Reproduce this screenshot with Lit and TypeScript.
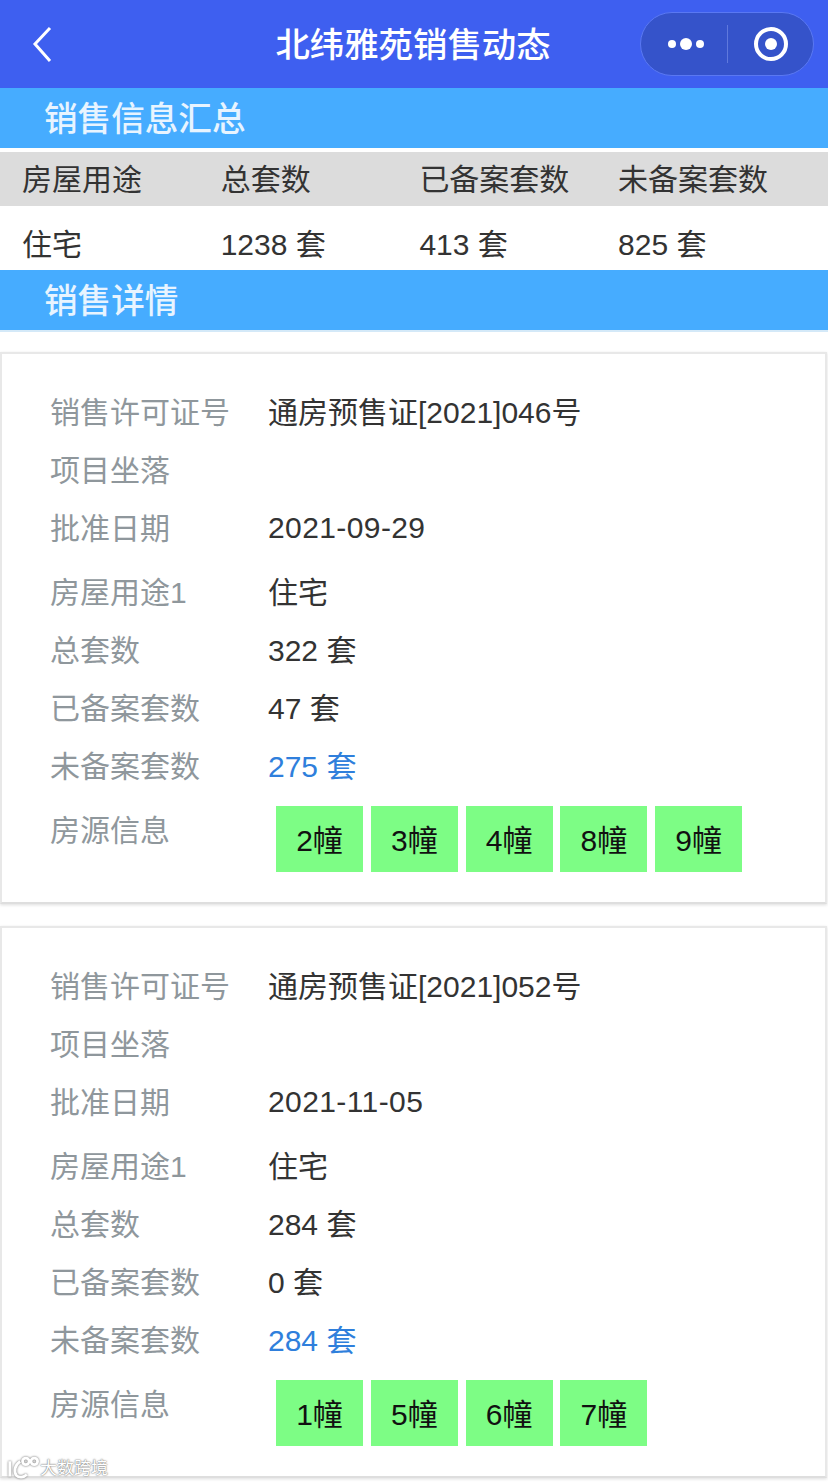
import { LitElement, html, css, svg } from "lit";
import { customElement } from "lit/decorators.js";

interface Sale {
  licence: string;
  date: string;
  total: number;
  filed: number;
  unfiled: number;
  buildings: string[];
}

const SALES: Sale[] = [
  { licence: "通房预售证[2021]046号", date: "2021-09-29", total: 322, filed: 47, unfiled: 275, buildings: ["2幢", "3幢", "4幢", "8幢", "9幢"] },
  { licence: "通房预售证[2021]052号", date: "2021-11-05", total: 284, filed: 0, unfiled: 284, buildings: ["1幢", "5幢", "6幢", "7幢"] },
];

const backIcon = svg`<path d="M18 2 3 18l15 17" fill="none" stroke="#fff" stroke-width="3" />`;
const logo = svg`<g fill="none" stroke="#fff" stroke-width="3">
  <path d="M3 6v16M14 6C8 10 7 17 10 21c3 3 8 2 11-1" />
  <circle cx="20" cy="6" r="3.5" />
  <circle cx="29" cy="6" r="3.5" />
</g>`;

@customElement("app-root")
export class AppRoot extends LitElement {
  static styles = css`
    :host {
      display: block;
      position: relative;
      height: 1483px;
      overflow: hidden;
      background: #fff;
      font-family: "Liberation Sans", "Noto Sans CJK SC", sans-serif;
      font-size: 30px;
      color: #333;
    }
    .nav {
      height: 88px;
      background: #3e5ff0;
      display: flex;
      align-items: center;
      justify-content: center;
      position: relative;
    }
    .nav h1 {
      margin: 0;
      font-size: 34.4px;
      font-weight: 500;
      color: #fff;
      position: relative;
      top: -2px;
      left: -1px;
    }
    .back {
      position: absolute;
      left: 32px;
      top: 26px;
      width: 22px;
      height: 36px;
    }
    .capsule {
      position: absolute;
      left: 640px;
      top: 12px;
      width: 174px;
      height: 64px;
      box-sizing: border-box;
      border: 1px solid #5a78f2;
      border-radius: 32px;
      background: #3553ca;
      display: flex;
      align-items: center;
    }
    .dots,
    .target {
      display: flex;
      align-items: center;
      justify-content: center;
      gap: 4px;
    }
    .dots {
      flex: none;
      width: 86px;
      box-sizing: border-box;
      padding-left: 4px;
    }
    .target {
      flex: 1;
    }
    .dot {
      width: 8px;
      height: 8px;
      border-radius: 50%;
      background: #fff;
    }
    .dot.big {
      width: 12px;
      height: 12px;
    }
    .sep {
      width: 1px;
      height: 38px;
      background: #6079dd;
    }
    .ring {
      width: 34px;
      height: 34px;
      box-sizing: border-box;
      border: 4px solid #fff;
      border-radius: 50%;
      display: flex;
      align-items: center;
      justify-content: center;
    }
    .ring::after {
      content: "";
      width: 12px;
      height: 12px;
      border-radius: 50%;
      background: #fff;
    }
    .bar {
      height: 60px;
      background: #46acff;
      color: #e8f4ff;
      font-size: 33.6px;
      font-weight: 500;
      line-height: 64px;
      padding-left: 44px;
    }
    .bar.details {
      box-shadow: 0 2px 0 #d4e9f8;
    }
    .table {
      padding-top: 4px;
    }
    .cols {
      display: grid;
      grid-template-columns: repeat(4, 198.7px);
      padding-left: 22px;
      align-items: center;
      box-sizing: border-box;
    }
    .cols.head {
      height: 54px;
      padding-bottom: 4px;
      background: #dcdcdc;
    }
    .cols.body {
      height: 64px;
      padding-top: 7px;
    }
    .cards {
      padding-top: 22px;
      display: flex;
      flex-direction: column;
      gap: 22px;
    }
    .card {
      height: 552px;
      box-sizing: border-box;
      margin-right: 1px;
      padding: 27px 0 0 48px;
      border: 2px solid #e8e8e8;
      border-bottom-color: #dedede;
      box-shadow: 0 1px 3px #ddd;
    }
    .row {
      display: flex;
      align-items: center;
      height: 58px;
    }
    .row.use {
      margin-top: 6px;
    }
    .label {
      width: 218px;
      color: #8f979c;
      flex: none;
    }
    .value.open {
      color: #2f7fdc;
    }
    .value.date {
      letter-spacing: 0.4px;
      padding-top: 4px;
    }
    .row.houses {
      align-items: flex-start;
      height: auto;
      margin-top: 13px;
    }
    .row.houses .label {
      line-height: 49px;
    }
    .chips {
      display: flex;
      gap: 7.8px;
      padding-left: 8px;
    }
    .chip {
      width: 87px;
      height: 66px;
      background: #7dfd85;
      color: #111;
      display: flex;
      align-items: center;
      justify-content: center;
      padding-bottom: 3px;
      box-sizing: border-box;
    }
    .mark {
      position: absolute;
      left: 7px;
      bottom: 4px;
      display: flex;
      align-items: center;
      gap: 1px;
      font-size: 17px;
      color: #fff;
      text-shadow: 0 0 2px #777, 0 0 1px #777;
    }
    .mark svg {
      width: 32px;
      height: 24px;
      filter: drop-shadow(0 0 1px #666);
    }
  `;

  private renderCard(s: Sale) {
    return html`
      <div class="card">
        <div class="row"><span class="label">销售许可证号</span><span class="value">${s.licence}</span></div>
        <div class="row"><span class="label">项目坐落</span><span class="value"></span></div>
        <div class="row"><span class="label">批准日期</span><span class="value date">${s.date}</span></div>
        <div class="row use"><span class="label">房屋用途1</span><span class="value">住宅</span></div>
        <div class="row"><span class="label">总套数</span><span class="value">${s.total} 套</span></div>
        <div class="row"><span class="label">已备案套数</span><span class="value">${s.filed} 套</span></div>
        <div class="row"><span class="label">未备案套数</span><span class="value open">${s.unfiled} 套</span></div>
        <div class="row houses">
          <span class="label">房源信息</span>
          <div class="chips">${s.buildings.map((b) => html`<div class="chip">${b}</div>`)}</div>
        </div>
      </div>
    `;
  }

  render() {
    return html`
      <div class="nav">
        <svg class="back" viewBox="0 0 22 36">${backIcon}</svg>
        <h1>北纬雅苑销售动态</h1>
        <div class="capsule">
          <div class="dots"><i class="dot"></i><i class="dot big"></i><i class="dot"></i></div>
          <div class="sep"></div>
          <div class="target"><div class="ring"></div></div>
        </div>
      </div>
      <div class="bar">销售信息汇总</div>
      <div class="table">
        <div class="cols head"><span>房屋用途</span><span>总套数</span><span>已备案套数</span><span>未备案套数</span></div>
        <div class="cols body"><span>住宅</span><span>1238 套</span><span>413 套</span><span>825 套</span></div>
      </div>
      <div class="bar details">销售详情</div>
      <div class="cards">${SALES.map((s) => this.renderCard(s))}</div>
      <div class="mark">
        <svg viewBox="0 0 34 24">${logo}</svg>
        <span>大数跨境</span>
      </div>
    `;
  }
}
